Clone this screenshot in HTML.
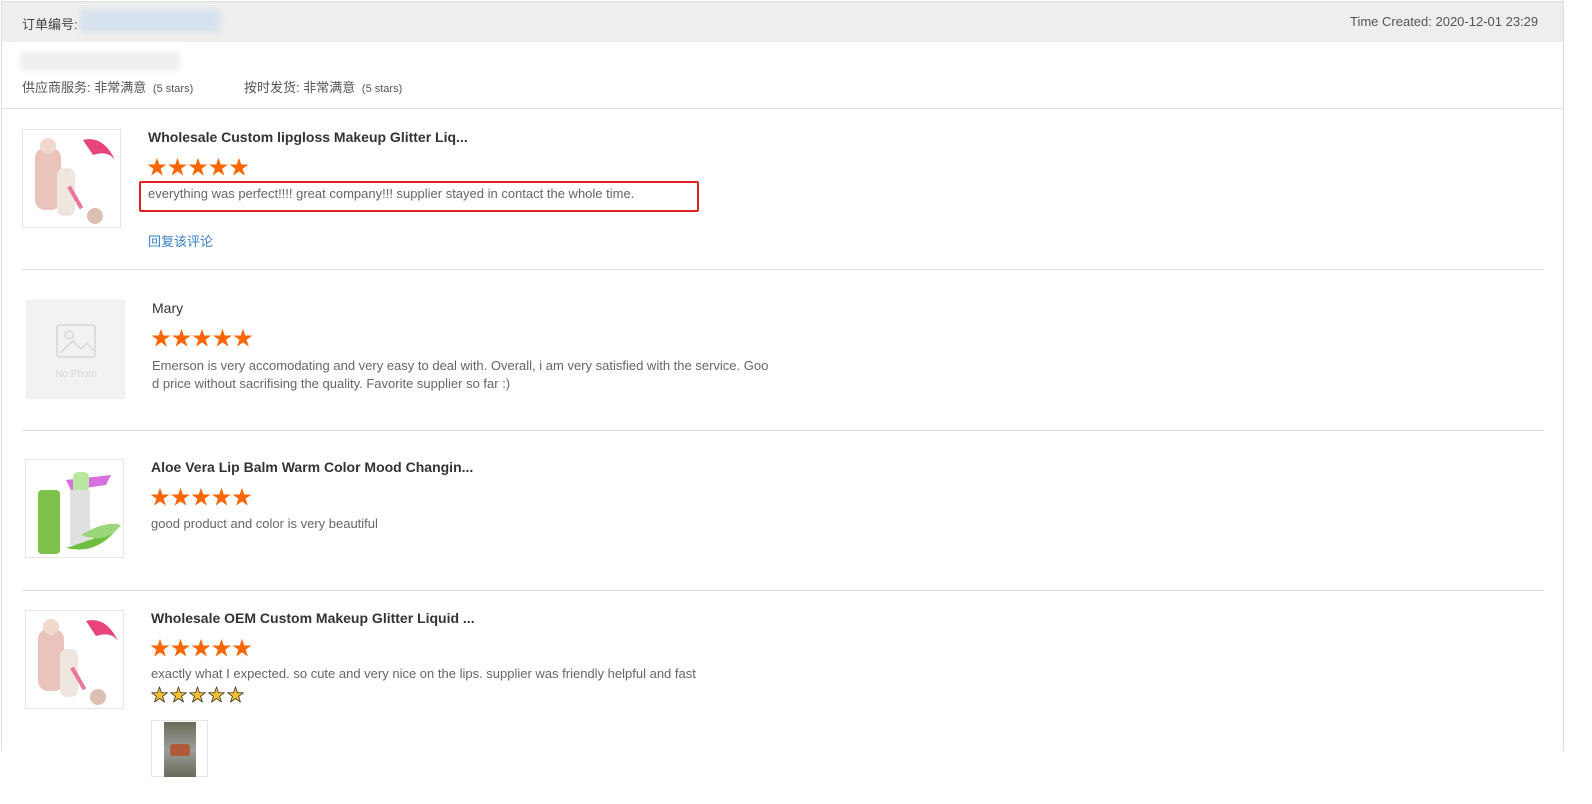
<!DOCTYPE html>
<html><head><meta charset="utf-8"><style>
*{margin:0;padding:0;box-sizing:border-box}
body{width:1592px;height:804px;background:#fff;font-family:"Liberation Sans","Noto Sans CJK SC",sans-serif;position:relative;overflow:hidden;color:#555}
.a{position:absolute;white-space:nowrap}
.box{position:absolute;left:1px;top:1px;width:1563px;height:750px;border:1px solid #ddd;border-bottom:none}
.hdr{position:absolute;left:2px;top:2px;width:1561px;height:40px;background:#eee}
.t13{font-size:13px;color:#555}
.ttl{font-size:14px;font-weight:bold;color:#333}
.stars{font-size:20px;color:#ff6600;letter-spacing:0.5px;line-height:20px}
.cmt{font-size:13px;color:#666}
.img{position:absolute;width:99px;height:99px;border:1px solid #e5e5e5;background:#fff;overflow:hidden}
.hr{position:absolute;left:22px;width:1522px;height:1px;background:#ddd}
</style></head><body>
<div class="box"></div>
<div class="hdr"></div>
<div class="a t13" style="left:22px;top:14px;color:#444">订单编号:</div>
<div class="a" style="left:80px;top:10px;width:140px;height:22px;background:#d6e2ee;filter:blur(3px)"></div>
<div class="a t13" style="left:1350px;top:14px">Time Created: 2020-12-01 23:29</div>
<div class="a" style="left:20px;top:52px;width:160px;height:18px;background:#eee;filter:blur(3px)"></div>
<div class="a t13" style="left:22px;top:77px">供应商服务: 非常满意 <span style="font-size:11px">&nbsp;(5 stars)</span></div>
<div class="a t13" style="left:244px;top:77px">按时发货: 非常满意 <span style="font-size:11px">&nbsp;(5 stars)</span></div>
<div class="a" style="left:2px;top:108px;width:1561px;height:1px;background:#ddd"></div>

<!-- item 1 -->
<div class="img" style="left:22px;top:129px"><svg width="99" height="99"><path d="M60 10 Q80 5 92 30 Q85 20 70 25 Z" fill="#e8437a"/><rect x="12" y="18" width="26" height="62" rx="10" fill="#e9c3bc"/><circle cx="25" cy="16" r="8" fill="#f0d8cc"/><rect x="34" y="38" width="18" height="48" rx="7" fill="#efe6df"/><rect x="50" y="55" width="4" height="25" fill="#e8779a" transform="rotate(-30 52 67)"/><circle cx="72" cy="86" r="8" fill="#dcbfb3"/></svg></div>
<div class="a ttl" style="left:148px;top:129px">Wholesale Custom lipgloss Makeup Glitter Liq...</div>
<div class="a stars" style="left:147px;top:158px">★★★★★</div>
<div class="a" style="left:139px;top:181px;width:560px;height:31px;border:2px solid #e02020;border-radius:2px"></div>
<div class="a cmt" style="left:148px;top:186px">everything was perfect!!!! great company!!! supplier stayed in contact the whole time.</div>
<div class="a" style="left:148px;top:231px;font-size:13px;color:#3a80c8">回复该评论</div>
<div class="hr" style="top:269px"></div>

<!-- item 2 -->
<div class="img" style="left:26px;top:300px;background:#f2f2f2;border-color:#eee"><svg width="99" height="99"><rect x="30" y="24" width="38" height="32" rx="3" fill="none" stroke="#ddd" stroke-width="2"/><circle cx="42" cy="34" r="4" fill="none" stroke="#ddd" stroke-width="2"/><path d="M33 52 L46 40 L54 48 L60 42 L67 50" fill="none" stroke="#ddd" stroke-width="2"/><text x="49" y="76" font-size="10" fill="#d8d8d8" text-anchor="middle" font-family="Liberation Sans">No Photo</text></svg></div>
<div class="a" style="left:152px;top:300px;font-size:14px;color:#333">Mary</div>
<div class="a stars" style="left:151px;top:329px">★★★★★</div>
<div class="a cmt" style="left:152px;top:357px;line-height:18px">Emerson is very accomodating and very easy to deal with. Overall, i am very satisfied with the service. Goo<br>d price without sacrifising the quality. Favorite supplier so far :)</div>
<div class="hr" style="top:430px"></div>

<!-- item 3 -->
<div class="img" style="left:25px;top:459px"><svg width="99" height="99"><path d="M40 20 L85 15 L80 25 L45 30Z" fill="#d86ee0"/><rect x="12" y="30" width="22" height="64" rx="4" fill="#7cc24a"/><rect x="47" y="12" width="16" height="20" rx="5" fill="#b8e8a0"/><rect x="44" y="30" width="20" height="55" fill="#e0e0e0"/><path d="M40 88 Q70 95 90 70 Q65 80 40 88Z" fill="#6cbf40"/><path d="M55 75 Q80 60 95 65 Q80 85 55 75Z" fill="#9bd67a"/></svg></div>
<div class="a ttl" style="left:151px;top:459px">Aloe Vera Lip Balm Warm Color Mood Changin...</div>
<div class="a stars" style="left:150px;top:488px">★★★★★</div>
<div class="a cmt" style="left:151px;top:516px">good product and color is very beautiful</div>
<div class="hr" style="top:590px"></div>

<!-- item 4 -->
<div class="img" style="left:25px;top:610px"><svg width="99" height="99"><path d="M60 10 Q80 5 92 30 Q85 20 70 25 Z" fill="#e8437a"/><rect x="12" y="18" width="26" height="62" rx="10" fill="#e9c3bc"/><circle cx="25" cy="16" r="8" fill="#f0d8cc"/><rect x="34" y="38" width="18" height="48" rx="7" fill="#efe6df"/><rect x="50" y="55" width="4" height="25" fill="#e8779a" transform="rotate(-30 52 67)"/><circle cx="72" cy="86" r="8" fill="#dcbfb3"/></svg></div>
<div class="a ttl" style="left:151px;top:610px">Wholesale OEM Custom Makeup Glitter Liquid ...</div>
<div class="a stars" style="left:150px;top:639px">★★★★★</div>
<div class="a cmt" style="left:151px;top:666px">exactly what I expected. so cute and very nice on the lips. supplier was friendly helpful and fast</div>
<div class="a" style="left:151px;top:681px;font-size:17px;color:#f5c030;-webkit-text-stroke:0.8px #333;letter-spacing:2px">★★★★★</div>
<div class="a" style="left:151px;top:720px;width:57px;height:57px;border:1px solid #e5e5e5"><div style="position:absolute;left:12px;top:1px;width:32px;height:55px;background:linear-gradient(#6a6a5a,#9aa09a,#6a6a5a)"><div style="position:absolute;left:6px;top:22px;width:20px;height:12px;background:#b0583a;border-radius:3px"></div></div></div>
</body></html>
